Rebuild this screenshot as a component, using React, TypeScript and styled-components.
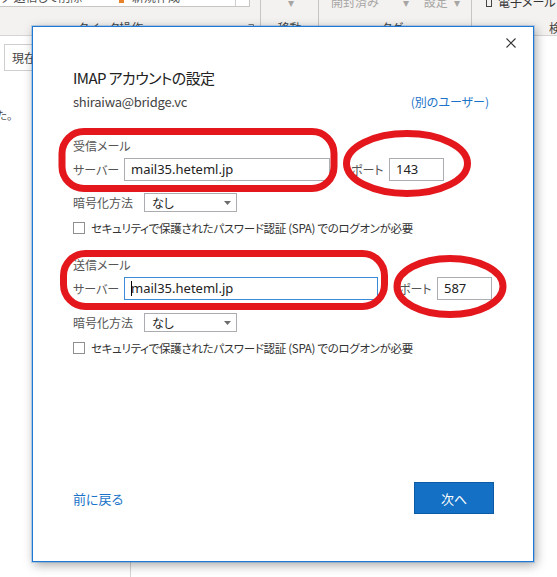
import React from "react";
import styled, { createGlobalStyle } from "styled-components";

const FONT = `"Noto Sans CJK JP", "Noto Sans", sans-serif`;

const GlobalStyle = createGlobalStyle`
  html, body { margin: 0; padding: 0; background: #ffffff; }
  body { font-family: ${FONT}; font-feature-settings: "palt" 1; }
  *, *::before, *::after { box-sizing: border-box; }
`;

const Page = styled.div`
  position: relative;
  width: 557px;
  height: 577px;
  overflow: hidden;
  display: flex;
  flex-direction: column;
  background: #ffffff;
`;

/* ---------- ribbon ---------- */
const Ribbon = styled.div`
  flex: none;
  height: 36px;
  display: flex;
  background: #f3f2f1;
  border-bottom: 1px solid #d6d5d4;
`;

const Group = styled.div<{ $w?: number }>`
  flex: ${(p) => (p.$w ? "none" : "1")};
  width: ${(p) => (p.$w ? `${p.$w}px` : "auto")};
  display: flex;
  flex-direction: column;
  border-right: ${(p) => (p.$w ? "1px solid #c8c6c4" : "none")};
  overflow: hidden;
`;

const TopRow = styled.div<{ $pl?: number }>`
  height: 20px;
  display: flex;
  align-items: flex-start;
  padding-left: ${(p) => p.$pl ?? 0}px;
`;

const TopText = styled.span<{ $dim?: boolean; $ml?: number }>`
  margin-top: -6px;
  margin-left: ${(p) => p.$ml ?? 0}px;
  line-height: 16px;
  font-size: 12px;
  white-space: nowrap;
  color: ${(p) => (p.$dim ? "#a8a6a4" : "#333333")};
`;

const Gallery = styled.div`
  width: 250px;
  height: 7px;
  display: flex;
  background: #ffffff;
  border-right: 1px solid #c8c6c4;
  border-bottom: 1px solid #c8c6c4;
  overflow: hidden;
`;

const GalleryItem = styled.div<{ $w: number }>`
  width: ${(p) => p.$w}px;
  display: flex;
  align-items: flex-start;
  gap: 4px;
`;

const GalleryText = styled.span`
  margin-top: -11px;
  line-height: 16px;
  font-size: 12px;
  color: #555555;
  white-space: nowrap;
`;

const GalleryScroll = styled.div`
  margin-left: auto;
  width: 14px;
  border-left: 1px solid #d0cecc;
`;

const GroupLabel = styled.div<{ $pl?: number; $pr?: number; $left?: boolean }>`
  position: relative;
  height: 15px;
  line-height: 15px;
  font-size: 12px;
  color: #444444;
  white-space: nowrap;
  text-align: ${(p) => (p.$left ? "left" : "center")};
  padding-left: ${(p) => p.$pl ?? 0}px;
  padding-right: ${(p) => p.$pr ?? 0}px;
`;

const Launcher = styled.svg`
  position: absolute;
  right: 6px;
  top: 4px;
`;

/* ---------- workspace ---------- */
const Workspace = styled.div`
  flex: 1;
  display: flex;
`;

const LeftPane = styled.div`
  flex: none;
  width: 131px;
  border-right: 1px solid #d4d4d4;
  display: flex;
  flex-direction: column;
`;

const ScopeBox = styled.div`
  margin-top: 8px;
  margin-left: 4px;
  height: 27px;
  border: 1px solid #cfcfcf;
  border-right: none;
  padding-left: 7px;
  font-size: 12px;
  line-height: 25px;
  color: #444444;
  white-space: nowrap;
`;

const MessageLine = styled.div`
  margin-top: 36px;
  margin-left: -23px;
  font-size: 11px;
  line-height: 16px;
  color: #4a4a4a;
  white-space: nowrap;
`;

/* ---------- dialog ---------- */
const Dialog = styled.div`
  position: absolute;
  left: 32px;
  top: 26px;
  width: 502px;
  height: 536px;
  background: #ffffff;
  border: 1px solid #1f78d1;
  box-shadow: 0 0 0 1px rgba(31, 120, 209, 0.25), 2px 3px 10px rgba(0, 0, 0, 0.35);
  display: flex;
  flex-direction: column;
  padding: 0 40px 47px 40px;
`;

const CloseRow = styled.div`
  height: 30px;
  display: flex;
  justify-content: flex-end;
  margin-right: -23px;
`;

const CloseIcon = styled.svg`
  margin-top: 11px;
`;

const Title = styled.div`
  margin-top: 11px;
  font-size: 15px;
  line-height: 20px;
  letter-spacing: -0.6px;
  color: #222222;
`;

const AccountRow = styled.div`
  margin-top: 4px;
  display: flex;
  justify-content: space-between;
  align-items: center;
  height: 18px;
`;

const Email = styled.span`
  font-size: 13px;
  letter-spacing: -0.25px;
  color: #444444;
`;

const Link = styled.span`
  font-size: 12px;
  color: #1a73c8;
  margin-right: 4px;
`;

const SectionLabel = styled.div<{ $mt: number }>`
  margin-top: ${(p) => p.$mt}px;
  font-size: 12px;
  line-height: 16px;
  color: #555555;
`;

const FieldRow = styled.div<{ $mt: number; $h: number }>`
  margin-top: ${(p) => p.$mt}px;
  height: ${(p) => p.$h}px;
  display: flex;
  align-items: center;
`;

const FieldLabel = styled.span<{ $w: number; $ml?: number }>`
  flex: none;
  width: ${(p) => p.$w}px;
  margin-left: ${(p) => p.$ml ?? 0}px;
  font-size: 12px;
  color: #555555;
  white-space: nowrap;
`;

const TextBox = styled.div<{ $w: number; $focus?: boolean }>`
  flex: none;
  width: ${(p) => p.$w}px;
  height: 23px;
  border: 1px solid ${(p) => (p.$focus ? "#3b8bd9" : "#abadb3")};
  padding: 0 6px;
  font-family: "Noto Sans", ${FONT};
  font-size: 13px;
  line-height: 21px;
  color: #222222;
  white-space: nowrap;
  overflow: hidden;
`;

const Caret = styled.span`
  display: inline-block;
  width: 1px;
  height: 15px;
  margin-right: -1px;
  vertical-align: -3px;
  background: #000000;
`;

const SelectBox = styled.div`
  flex: none;
  width: 93px;
  height: 19px;
  border: 1px solid #abadb3;
  padding: 0 5px 0 7px;
  display: flex;
  align-items: center;
  justify-content: space-between;
  font-size: 12px;
  color: #222222;
`;

const CheckRow = styled.div<{ $mt: number }>`
  margin-top: ${(p) => p.$mt}px;
  height: 16px;
  display: flex;
  align-items: center;
`;

const CheckBox = styled.span`
  flex: none;
  width: 12px;
  height: 12px;
  border: 1px solid #8f8f8f;
  background: #ffffff;
`;

const CheckLabel = styled.span`
  margin-left: 6px;
  font-size: 11.5px;
  letter-spacing: -0.3px;
  color: #333333;
  white-space: nowrap;
`;

const Spacer = styled.div`
  flex: 1;
`;

const Footer = styled.div`
  height: 32px;
  display: flex;
  align-items: center;
  justify-content: space-between;
`;

const BackLink = styled.span`
  font-size: 13px;
  color: #1a73c8;
`;

const NextButton = styled.div`
  width: 80px;
  height: 32px;
  margin-right: -1px;
  background: #1470c4;
  border: 1px solid #0d5aa5;
  display: flex;
  align-items: center;
  justify-content: center;
  font-size: 13px;
  color: #ffffff;
`;

const Annotations = styled.svg`
  position: absolute;
  left: 0;
  top: 0;
  pointer-events: none;
`;

const RED = "#e4171d";

export default function App() {
  return (
    <Page>
      <GlobalStyle />
      <Ribbon>
        <Group $w={261}>
          <TopRow>
            <Gallery>
              <GalleryItem $w={118}>
                <GalleryText>&#x30C3;</GalleryText>
                <GalleryText>返信して削除</GalleryText>
              </GalleryItem>
              <GalleryItem $w={100}>
                <svg width="10" height="4" viewBox="0 0 10 4" style={{ flex: "none" }}>
                  <rect x="1" y="0" width="5" height="3" fill="#e8822a" />
                </svg>
                <GalleryText>新規作成</GalleryText>
              </GalleryItem>
              <GalleryScroll />
            </Gallery>
          </TopRow>
          <GroupLabel $pr={39}>
            クイック操作
            <Launcher width="6" height="6" viewBox="0 0 6 6">
              <path d="M0.5 0.5 H5.5 V5.5" fill="none" stroke="#777" strokeWidth="1" />
            </Launcher>
          </GroupLabel>
        </Group>
        <Group $w={58}>
          <TopRow $pl={27}>
            <TopText $dim>▾</TopText>
          </TopRow>
          <GroupLabel>移動</GroupLabel>
        </Group>
        <Group $w={153}>
          <TopRow $pl={12}>
            <TopText $dim>開封済み</TopText>
            <TopText $dim $ml={24}>▾</TopText>
            <TopText $dim $ml={15}>設定</TopText>
            <TopText $dim $ml={6}>▾</TopText>
          </TopRow>
          <GroupLabel $pr={6}>タグ</GroupLabel>
        </Group>
        <Group>
          <TopRow $pl={14}>
            <svg width="8" height="10" viewBox="0 0 8 10" style={{ marginTop: -2, flex: "none" }}>
              <rect x="0.5" y="0.5" width="5" height="8" fill="none" stroke="#444" />
            </svg>
            <TopText $ml={4}>電子メール</TopText>
          </TopRow>
          <GroupLabel $left $pl={77}>検索</GroupLabel>
        </Group>
      </Ribbon>

      <Workspace>
        <LeftPane>
          <ScopeBox>現在のメールボックス</ScopeBox>
          <MessageLine>ました。</MessageLine>
        </LeftPane>
      </Workspace>

      <Dialog>
        <CloseRow>
          <CloseIcon width="10" height="10" viewBox="0 0 10 10">
            <path d="M0.5 0.5 L9.5 9.5 M9.5 0.5 L0.5 9.5" stroke="#333" strokeWidth="1.1" fill="none" />
          </CloseIcon>
        </CloseRow>
        <Title>IMAP アカウントの設定</Title>
        <AccountRow>
          <Email>shiraiwa@bridge.vc</Email>
          <Link>(別のユーザー)</Link>
        </AccountRow>

        <SectionLabel $mt={28}>受信メール</SectionLabel>
        <FieldRow $mt={4} $h={23}>
          <FieldLabel $w={51}>サーバー</FieldLabel>
          <TextBox $w={206}>mail35.heteml.jp</TextBox>
          <FieldLabel $w={38} $ml={21}>ポート</FieldLabel>
          <TextBox $w={55}>143</TextBox>
        </FieldRow>
        <FieldRow $mt={12} $h={19}>
          <FieldLabel $w={71}>暗号化方法</FieldLabel>
          <SelectBox>
            なし
            <svg width="7" height="4" viewBox="0 0 7 4">
              <path d="M0 0 H7 L3.5 4 Z" fill="#6d6d6d" />
            </svg>
          </SelectBox>
        </FieldRow>
        <CheckRow $mt={8}>
          <CheckBox />
          <CheckLabel>セキュリティで保護されたパスワード認証 (SPA) でのログオンが必要</CheckLabel>
        </CheckRow>

        <SectionLabel $mt={21}>送信メール</SectionLabel>
        <FieldRow $mt={4} $h={23}>
          <FieldLabel $w={51}>サーバー</FieldLabel>
          <TextBox $w={254} $focus>
            <Caret />
            mail35.heteml.jp
          </TextBox>
          <FieldLabel $w={38} $ml={21}>ポート</FieldLabel>
          <TextBox $w={55}>587</TextBox>
        </FieldRow>
        <FieldRow $mt={13} $h={19}>
          <FieldLabel $w={71}>暗号化方法</FieldLabel>
          <SelectBox>
            なし
            <svg width="7" height="4" viewBox="0 0 7 4">
              <path d="M0 0 H7 L3.5 4 Z" fill="#6d6d6d" />
            </svg>
          </SelectBox>
        </FieldRow>
        <CheckRow $mt={8}>
          <CheckBox />
          <CheckLabel>セキュリティで保護されたパスワード認証 (SPA) でのログオンが必要</CheckLabel>
        </CheckRow>

        <Spacer />
        <Footer>
          <BackLink>前に戻る</BackLink>
          <NextButton>次へ</NextButton>
        </Footer>
      </Dialog>

      <Annotations width="557" height="577" viewBox="0 0 557 577">
        <g fill="none" stroke={RED} strokeWidth="7">
          <rect x="62" y="131.5" width="272" height="57" rx="22" ry="22" />
          <ellipse cx="407" cy="163.5" rx="60.5" ry="30" />
          <rect x="63.5" y="253.5" width="321" height="53" rx="22" ry="22" />
          <ellipse cx="450" cy="286.5" rx="53" ry="28" />
        </g>
      </Annotations>
    </Page>
  );
}
